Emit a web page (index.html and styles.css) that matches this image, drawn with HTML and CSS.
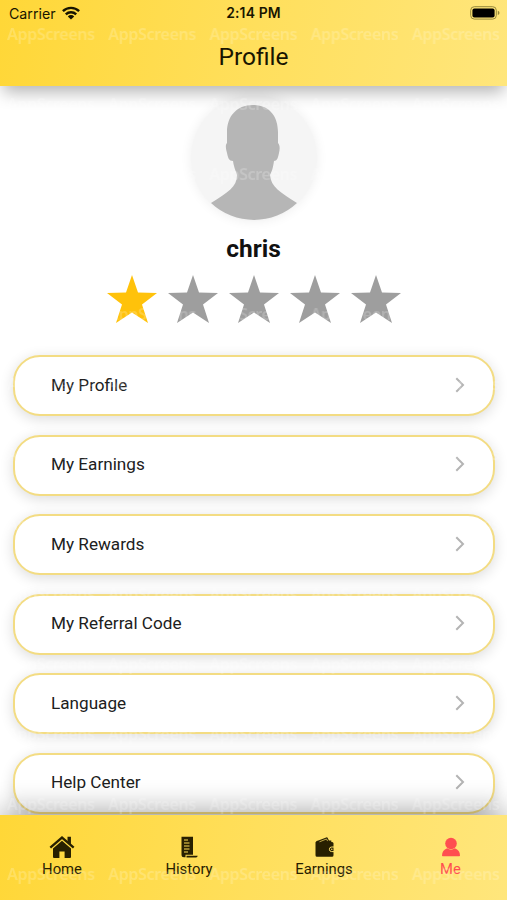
FILE: index.html
```html
<!DOCTYPE html>
<html lang="en">
<head>
<meta charset="utf-8">
<title>Profile</title>
<link rel="stylesheet" href="styles.css">
</head>
<body>
<div class="app">
  <header class="header">
    <div class="status">
      <div class="carrier"><span>Carrier</span>
        <svg width="18" height="14" viewBox="0 0 18 14" fill="none" stroke="#181500" stroke-width="2.4"><path d="M.9 5.2a11.6 11.6 0 0 1 16.2 0M3.8 8.4a7.5 7.5 0 0 1 10.4 0"/><path d="M9 13.6 5.8 10.4a4.6 4.6 0 0 1 6.4 0z" fill="#181500" stroke="none"/></svg>
      </div>
      <div class="time">2:14 PM</div>
      <svg class="battery" width="30" height="14" viewBox="0 0 30 14"><rect x=".7" y=".7" width="25.6" height="12.4" rx="3.6" fill="none" stroke="#95883b" stroke-width="1"/><rect x="2.4" y="2.4" width="22.2" height="9" rx="2" fill="#000"/><path d="M27.8 4.8q1.7.6 1.7 2.1t-1.7 2.1z" fill="#95883b"/></svg>
    </div>
    <h1>Profile</h1>
  </header>
  <main class="content">
    <div class="avatar">
      <svg width="126" height="126" viewBox="0 0 126 126"><path d="M62 10C45 10 36 22 36 37v11c-2 2-1 6 0 10 1 5 2 8 6 8 1 7 3 10 4 14 0 12-9 17-26 28a63 63 0 0 0 86 0C89 97 80 92 79 80c2-4 3-7 4-14 3 0 4-3 5-8 1-4 1-8-1-10V37C87 22 79 10 62 10Z" fill="#b6b6b6"/></svg>
    </div>
    <h2>chris</h2>
    <div class="stars">
      <svg class="on" viewBox="0 0 50 48"><path d="M25 0 31 17.5 50 18 35 29.5 41 48 25 37.5 9 48 15 29.5 0 18 19 17.5Z"/></svg>
      <svg viewBox="0 0 50 48"><path d="M25 0 31 17.5 50 18 35 29.5 41 48 25 37.5 9 48 15 29.5 0 18 19 17.5Z"/></svg>
      <svg viewBox="0 0 50 48"><path d="M25 0 31 17.5 50 18 35 29.5 41 48 25 37.5 9 48 15 29.5 0 18 19 17.5Z"/></svg>
      <svg viewBox="0 0 50 48"><path d="M25 0 31 17.5 50 18 35 29.5 41 48 25 37.5 9 48 15 29.5 0 18 19 17.5Z"/></svg>
      <svg viewBox="0 0 50 48"><path d="M25 0 31 17.5 50 18 35 29.5 41 48 25 37.5 9 48 15 29.5 0 18 19 17.5Z"/></svg>
    </div>
    <div class="menu">
      <div class="row"><span>My Profile</span><svg viewBox="0 0 10 16"><path d="m1.3 1.3 6.7 6.7-6.7 6.7"/></svg></div>
      <div class="row"><span>My Earnings</span><svg viewBox="0 0 10 16"><path d="m1.3 1.3 6.7 6.7-6.7 6.7"/></svg></div>
      <div class="row"><span>My Rewards</span><svg viewBox="0 0 10 16"><path d="m1.3 1.3 6.7 6.7-6.7 6.7"/></svg></div>
      <div class="row"><span>My Referral Code</span><svg viewBox="0 0 10 16"><path d="m1.3 1.3 6.7 6.7-6.7 6.7"/></svg></div>
      <div class="row"><span>Language</span><svg viewBox="0 0 10 16"><path d="m1.3 1.3 6.7 6.7-6.7 6.7"/></svg></div>
      <div class="row"><span>Help Center</span><svg viewBox="0 0 10 16"><path d="m1.3 1.3 6.7 6.7-6.7 6.7"/></svg></div>
    </div>
  </main>
  <nav class="tabs">
    <div class="tab">
      <svg width="26" height="22" viewBox="0 0 26 22"><path d="M4 12.5 13 4.8l9 7.7V21q0 1-1 1h-5.4v-6.5h-5.2V22H5q-1 0-1-1Z"/><path d="M1.3 11.6 13 1.6l11.7 10M20.3 1v6.5" fill="none" stroke="currentColor" stroke-width="2.3"/><path d="M18.5.7h3.4v8l-3.4-3z"/></svg>
      <span>Home</span>
    </div>
    <div class="tab">
      <svg width="26" height="22" viewBox="0 0 26 22"><path fill-rule="evenodd" d="M5.5.8H17v18H9.5v2.4H8q-2.5 0-2.5-2.5ZM8 3.6v.8h4V3.6Zm0 3v.8h5.5V6.6Zm0 3v.8h5.5V9.6Zm0 3v.8h5.5v-.8Zm0 3v.8h4v-.8Z"/><path d="M10.5 19.8h11.2q-.2 1.7-1.7 1.7h-9.5z"/></svg>
      <span>History</span>
    </div>
    <div class="tab">
      <svg width="26" height="22" viewBox="0 0 26 22"><path d="M4.5 6.2Q5 4.5 8 4.2l7.2-2.8q1-.5 1.5.5l1.3 2.5 2.3.2v1.3q2.2 0 2.2 1.4v12q0 1.5-1.5 1.5H6q-1.5 0-1.5-1.5Z"/><path d="m8.5 5.8 7-2.8 1.1 2.1" fill="none" stroke="#ffe067" stroke-width=".7"/><path d="M23 11h-2.3a2.3 2.3 0 0 0 0 4.6H23" fill="none" stroke="#ffe067" stroke-width="1"/><circle cx="20.8" cy="13.3" r=".8" fill="#ffe067"/></svg>
      <span>Earnings</span>
    </div>
    <div class="tab active">
      <svg width="26" height="22" viewBox="0 0 26 22"><circle cx="13" cy="7.5" r="5.8"/><path d="M4 19.5q0-5.3 5.2-7.3 3.8 2.9 7.6 0 5.2 2 5.2 7.3 0 .7-.8.7H4.8q-.8 0-.8-.7Z"/></svg>
      <span>Me</span>
    </div>
  </nav>
  <svg class="watermark" width="507" height="900" aria-hidden="true">
    <defs><pattern id="mark" x="7" y="20" width="101.2" height="70" patternUnits="userSpaceOnUse"><text x="0" y="20" textLength="88">AppScreens</text></pattern></defs>
    <rect width="507" height="220" fill="url(#mark)"/>
    <rect y="290" width="507" height="610" fill="url(#mark)"/>
  </svg>
</div>
</body>
</html>
```
FILE: styles.css
```css
* { box-sizing: border-box; }
body { margin: 0; font-family: Roboto, sans-serif; color: #202020; }
h1, h2 { margin: 0; }
svg { display: block; flex: none; }
.app {
  position: relative;
  width: 507px;
  height: 900px;
  overflow: hidden;
  display: flex;
  flex-direction: column;
  background: #fff;
}
.header, .tabs {
  flex: none;
  background: linear-gradient(100deg, #ffd737 0%, #ffdf5c 50%, #ffe67c 100%);
  position: relative;
  z-index: 1;
}
.header { height: 86px; box-shadow: 0 9px 16px -3px rgba(0, 0, 0, .3); }
.status {
  height: 26px;
  padding: 0 7px 0 9px;
  display: grid;
  grid-template-columns: 1fr auto 1fr;
  align-items: center;
  font-family: Inter, sans-serif;
  font-size: 14.2px;
  color: #181500;
}
.carrier { display: flex; align-items: center; gap: 6px; }
.carrier svg { margin-top: -1px; }
.time { font-weight: 600; font-size: 13.9px; padding-right: 2px; letter-spacing: .15px; }
.battery { justify-self: end; }
h1 {
  height: 60px;
  line-height: 62px;
  text-align: center;
  font-size: 24.5px;
  font-weight: 400;
  color: #181500;
}
.content { flex: 1; min-height: 0; }
.avatar {
  width: 126px;
  height: 126px;
  margin: 9px auto 0 191px;
  border-radius: 50%;
  background: #f5f5f5;
  box-shadow: 0 0 12px rgba(0, 0, 0, .07);
  overflow: hidden;
}
h2 {
  height: 31px;
  margin-top: 12px;
  line-height: 31px;
  text-align: center;
  font-size: 24.5px;
  font-weight: 700;
  color: #111;
}
.stars { display: flex; justify-content: center; gap: 11.2px; margin-top: 11px; padding-left: 1px; }
.stars svg { width: 50px; height: 48px; fill: #9e9e9e; }
.stars .on { fill: #ffc20b; }
.menu { display: grid; gap: 18.5px; padding: 32px 12px 0 13px; }
.row {
  height: 61px;
  border: 2px solid #f3dc83;
  border-radius: 27px;
  background: #fff;
  box-shadow: 0 3px 14px rgba(0, 0, 0, .14);
  display: flex;
  align-items: center;
  justify-content: space-between;
  padding: 0 28px 2px 36px;
  font-size: 17.15px;
}
.row svg { width: 10px; height: 16px; fill: none; stroke: #b4b4b4; stroke-width: 2; }
.tabs {
  height: 85px;
  display: flex;
  padding: 21px 0 0;
  box-shadow: 0 -6px 28px rgba(0, 0, 0, .32);
}
.tab {
  width: 131px;
  display: flex;
  flex-direction: column;
  align-items: center;
  font-size: 14.8px;
  line-height: 18px;
  gap: 2px;
  color: #282000;
  fill: currentColor;
}
.tab:first-child { width: 124px; }
.tab:nth-child(2) { width: 130px; }
.tab:nth-child(3) { width: 140px; }
.tab:last-child { width: 113px; }
.active { color: #ff4e50; }
.watermark { position: absolute; inset: 0; z-index: 2; pointer-events: none; }
.watermark text { font: 600 16px "Noto Sans", sans-serif; fill: #fff; fill-opacity: .2; }
```
